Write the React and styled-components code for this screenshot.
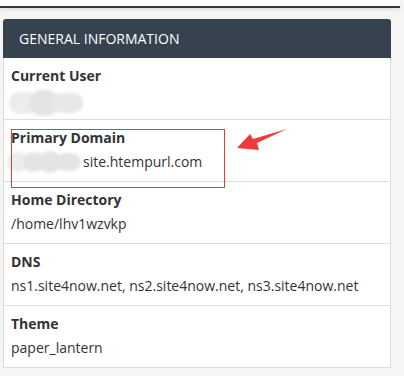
import React from "react";
import styled, { createGlobalStyle } from "styled-components";

const GlobalStyle = createGlobalStyle`
  html, body { margin: 0; padding: 0; }
  body {
    background: #f5f5f5;
    font-family: "Open Sans", "Liberation Sans", Arial, sans-serif;
    width: 404px;
    height: 376px;
    overflow: hidden;
  }
`;

const TopBar = styled.div`
  height: 6px;
  width: 400px;
  background: #fff;
  border-bottom: 2px solid #2d3a47;
  box-shadow: 0 2px 3px rgba(0, 0, 0, 0.08);
`;

const Content = styled.div`
  padding: 11px 0 0 3px;
`;

const Panel = styled.div`
  position: relative;
  width: 388px;
  background: #fff;
  border-radius: 3px 3px 0 0;
`;

const Header = styled.div`
  height: 39px;
  display: flex;
  align-items: center;
  padding-left: 16px;
  background: #36434f;
  color: #fff;
  font-size: 14px;
  border-radius: 3px 3px 0 0;
`;

const Body = styled.div`
  border-left: 1px solid #dcdcdc;
  border-right: 1px solid #dcdcdc;
`;

const Row = styled.div`
  padding: 8px 7px 9px;
  border-bottom: 1px solid #dddddd;
`;

const Label = styled.div`
  font-size: 14px;
  line-height: 20px;
  font-weight: 700;
  color: #333;
  margin-bottom: 4px;
`;

const Value = styled.div`
  font-size: 14px;
  line-height: 20px;
  color: #333;
  display: flex;
  align-items: center;
  height: 20px;
`;

const Smudge = styled.span`
  display: inline-flex;
  align-items: center;
  flex-shrink: 0;
  margin-left: ${(p) => p.$ml || 0}px;
  margin-top: ${(p) => p.$mt || 0}px;
  filter: blur(1.5px);
`;

const Blob = styled.span`
  display: inline-block;
  width: ${(p) => p.$w}px;
  height: ${(p) => p.$h}px;
  margin-left: ${(p) => p.$ml || 0}px;
  border-radius: ${(p) => p.$h / 2}px;
  background: ${(p) => p.$c || "#e4e4e6"};
`;

const DomainText = styled.span`
  margin-left: 2px;
`;

const Highlight = styled.div`
  position: absolute;
  left: 8px;
  top: 110px;
  width: 212px;
  height: 57px;
  border: 1px solid #e53a3a;
`;

const Arrow = styled.svg`
  position: absolute;
  left: 230px;
  top: 105px;
`;

export default function App() {
  return (
    <>
      <GlobalStyle />
      <TopBar />
      <Content>
        <Panel>
          <Header>GENERAL INFORMATION</Header>
          <Body>
            <Row>
              <Label>Current User</Label>
              <Value>
                <Smudge $ml={-2} $mt={6}>
                  <Blob $w={28} $h={22} $c="#ececee" />
                  <Blob $w={30} $h={26} $ml={-8} />
                  <Blob $w={32} $h={20} $ml={-8} $c="#e8e8ea" />
                </Smudge>
              </Value>
            </Row>
            <Row>
              <Label>Primary Domain</Label>
              <Value>
                <Smudge $ml={-4}>
                  <Blob $w={22} $h={20} $c="#ececee" />
                  <Blob $w={22} $h={20} $ml={-6} />
                  <Blob $w={22} $h={22} $ml={-6} />
                  <Blob $w={26} $h={18} $ml={-6} />
                </Smudge>
                <DomainText>site.htempurl.com</DomainText>
              </Value>
            </Row>
            <Row>
              <Label>Home Directory</Label>
              <Value>/home/lhv1wzvkp</Value>
            </Row>
            <Row>
              <Label>DNS</Label>
              <Value>ns1.site4now.net, ns2.site4now.net, ns3.site4now.net</Value>
            </Row>
            <Row>
              <Label>Theme</Label>
              <Value>paper_lantern</Value>
            </Row>
          </Body>
          <Highlight />
          <Arrow width="60" height="50" viewBox="0 0 60 50">
            <polygon
              points="4,24 17,10 20,15 54,5 24,19 26,26"
              fill="#f03a3a"
            />
          </Arrow>
        </Panel>
      </Content>
    </>
  );
}
